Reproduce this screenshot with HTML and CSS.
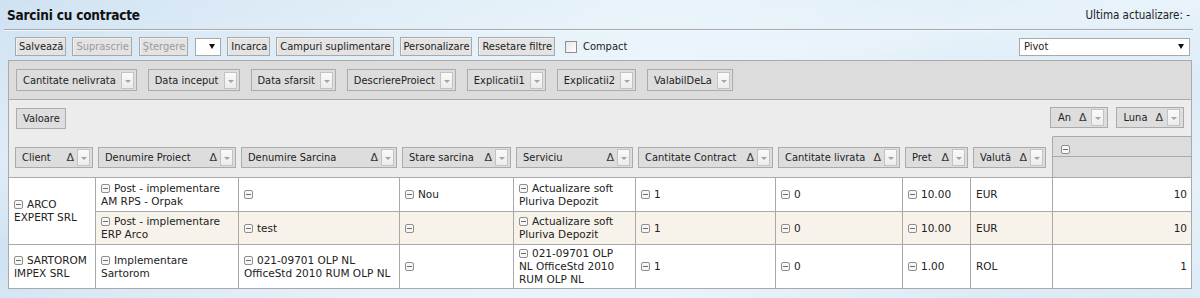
FILE: index.html
```html
<!DOCTYPE html>
<html lang="ro">
<head>
<meta charset="utf-8">
<title>Sarcini cu contracte</title>
<link rel="stylesheet" href="styles.css">
</head>
<body>
<div class="titlebar">
  <h1 class="title">Sarcini cu contracte</h1>
  <span class="updated">Ultima actualizare: -</span>
</div>

<div class="toolbar">
  <div class="tools">
    <button class="btn">Salvează</button>
    <button class="btn" disabled>Suprascrie</button>
    <button class="btn btn-gap" disabled>Ştergere</button>
    <span class="select small-select"><span class="select-text"></span><span class="select-arrow"></span></span>
    <button class="btn">Incarca</button>
    <button class="btn">Campuri suplimentare</button>
    <button class="btn">Personalizare</button>
    <button class="btn">Resetare filtre</button>
    <label class="check"><span class="checkbox"></span>Compact</label>
  </div>
  <span class="select wide-select"><span class="select-text">Pivot</span><span class="select-arrow"></span></span>
</div>

<div class="pivot">
  <div class="filter-area">
    <span class="field"><span class="field-name">Cantitate nelivrata</span><span class="dd"></span></span>
    <span class="field"><span class="field-name">Data inceput</span><span class="dd"></span></span>
    <span class="field"><span class="field-name">Data sfarsit</span><span class="dd"></span></span>
    <span class="field"><span class="field-name">DescriereProiect</span><span class="dd"></span></span>
    <span class="field"><span class="field-name">Explicatii1</span><span class="dd"></span></span>
    <span class="field"><span class="field-name">Explicatii2</span><span class="dd"></span></span>
    <span class="field"><span class="field-name">ValabilDeLa</span><span class="dd"></span></span>
  </div>

  <div class="data-area">
    <span class="field data-field"><span class="field-name">Valoare</span></span>
    <div class="col-fields">
      <span class="field col-field"><span class="field-name">An</span><span class="sort">Δ</span><span class="dd"></span></span>
      <span class="field col-field"><span class="field-name">Luna</span><span class="sort">Δ</span><span class="dd"></span></span>
    </div>
  </div>

  <table class="grid">
    <colgroup>
      <col class="c1"><col class="c2"><col class="c3"><col class="c4"><col class="c5">
      <col class="c6"><col class="c7"><col class="c8"><col class="c9"><col class="c10">
    </colgroup>
    <thead>
      <tr class="row-fields">
        <th class="first"><span class="field row-field"><span class="field-name">Client</span><span class="sort">Δ</span><span class="dd"></span></span></th>
        <th><span class="field row-field"><span class="field-name">Denumire Proiect</span><span class="sort">Δ</span><span class="dd"></span></span></th>
        <th><span class="field row-field"><span class="field-name">Denumire Sarcina</span><span class="sort">Δ</span><span class="dd"></span></span></th>
        <th><span class="field row-field"><span class="field-name">Stare sarcina</span><span class="sort">Δ</span><span class="dd"></span></span></th>
        <th><span class="field row-field"><span class="field-name">Serviciu</span><span class="sort">Δ</span><span class="dd"></span></span></th>
        <th><span class="field row-field"><span class="field-name">Cantitate Contract</span><span class="sort">Δ</span><span class="dd"></span></span></th>
        <th><span class="field row-field"><span class="field-name">Cantitate livrata</span><span class="sort">Δ</span><span class="dd"></span></span></th>
        <th><span class="field row-field"><span class="field-name">Pret</span><span class="sort">Δ</span><span class="dd"></span></span></th>
        <th class="last-row-field"><span class="field row-field"><span class="field-name">Valută</span><span class="sort">Δ</span><span class="dd"></span></span></th>
        <th class="colhead">
          <div class="colhead-top"><span class="tg"></span></div>
          <div class="colhead-bottom"></div>
        </th>
      </tr>
    </thead>
    <tbody>
      <tr class="r1">
        <td rowspan="2" class="client"><span class="tg"></span>ARCO<br>EXPERT SRL</td>
        <td><span class="tg"></span>Post - implementare<br>AM RPS - Orpak</td>
        <td><span class="tg"></span></td>
        <td><span class="tg"></span>Nou</td>
        <td><span class="tg"></span>Actualizare soft<br>Pluriva Depozit</td>
        <td><span class="tg"></span>1</td>
        <td><span class="tg"></span>0</td>
        <td><span class="tg"></span>10.00</td>
        <td>EUR</td>
        <td class="num">10</td>
      </tr>
      <tr class="r2 alt">
        <td><span class="tg"></span>Post - implementare<br>ERP Arco</td>
        <td><span class="tg"></span>test</td>
        <td><span class="tg"></span></td>
        <td><span class="tg"></span>Actualizare soft<br>Pluriva Depozit</td>
        <td><span class="tg"></span>1</td>
        <td><span class="tg"></span>0</td>
        <td><span class="tg"></span>10.00</td>
        <td>EUR</td>
        <td class="num">10</td>
      </tr>
      <tr class="r3">
        <td class="client"><span class="tg"></span>SARTOROM<br>IMPEX SRL</td>
        <td><span class="tg"></span>Implementare<br>Sartorom</td>
        <td><span class="tg"></span>021-09701 OLP NL<br>OfficeStd 2010 RUM OLP NL</td>
        <td><span class="tg"></span></td>
        <td><span class="tg"></span>021-09701 OLP<br>NL OfficeStd 2010<br>RUM OLP NL</td>
        <td><span class="tg"></span>1</td>
        <td><span class="tg"></span>0</td>
        <td><span class="tg"></span>1.00</td>
        <td>ROL</td>
        <td class="num">1</td>
      </tr>
    </tbody>
  </table>
</div>
</body>
</html>
```

FILE: styles.css
```css
html, body {
  margin: 0;
  padding: 0;
}

body {
  width: 1200px;
  height: 298px;
  overflow: hidden;
  font-family: "DejaVu Sans Condensed", "DejaVu Sans", sans-serif;
  font-stretch: condensed;
  font-size: 11px;
  color: #222;
  background:
    linear-gradient(172deg, rgba(255,255,255,0) 0%, rgba(255,255,255,0.35) 35%, rgba(255,255,255,0) 55%, rgba(255,255,255,0.3) 75%, rgba(255,255,255,0) 100%),
    linear-gradient(90deg, #cfe2f2 0%, #dcebf6 30%, #e3f0f9 55%, #d9eaf6 80%, #dcecf7 100%);
}

/* ---------- title ---------- */
.titlebar {
  display: flex;
  justify-content: space-between;
  align-items: center;
  height: 29px;
  margin: 0 7px 0 4px;
  padding: 0 3px;
  border-bottom: 1px solid #a7a9ab;
  box-shadow: 0 1px 0 #f2f7fb;
}

.title {
  margin: 0;
  font-size: 13.5px;
  letter-spacing: -0.2px;
  font-weight: bold;
  color: #111;
}

.updated {
  font-size: 11.5px;
  color: #222;
}

/* ---------- toolbar ---------- */
.toolbar {
  display: flex;
  justify-content: space-between;
  align-items: center;
  height: 19px;
  margin: 7px 10px 0 15px;
}

.tools {
  display: flex;
  align-items: center;
  gap: 6px;
}

.btn {
  height: 19px;
  padding: 0 2px 0 3px;
  border: 1px solid #a9a9a9;
  background: #e3e3e3;
  font-family: inherit;
  font-stretch: condensed;
  font-size: 11px;
  color: #222;
  box-shadow: inset 1px 1px 0 #f2f2f2;
}

.btn:disabled {
  color: #9b9b9b;
}

.btn-gap {
  margin-left: 1px;
}

.select {
  display: inline-flex;
  align-items: center;
  height: 18px;
  box-sizing: border-box;
  border: 1px solid #a9a9a9;
  background: #fff;
  padding: 0 5px 0 4px;
}

.small-select {
  width: 26px;
  margin-left: 1px;
}

.wide-select {
  width: 171px;
}

.select-text {
  flex: 1;
}

.select-arrow {
  width: 0;
  height: 0;
  border-left: 3px solid transparent;
  border-right: 3px solid transparent;
  border-top: 5px solid #111;
}

.check {
  display: inline-flex;
  align-items: center;
  gap: 6px;
  margin-left: 4px;
}

.checkbox {
  width: 12px;
  height: 12px;
  box-sizing: border-box;
  border: 1px solid #8e8f8f;
  background: linear-gradient(135deg, #e6e6e6, #fff);
}

/* ---------- pivot ---------- */
.pivot {
  margin: 4px 8px 0 8px;
  border: 1px solid #a9a9a9;
  border-bottom: 0;
  background: #ececec;
}

.filter-area {
  display: flex;
  align-items: center;
  height: 38px;
  padding-left: 7px;
  background: #dcdcdc;
  border-bottom: 1px solid #a9a9a9;
}

.filter-area .field {
  margin-right: 11px;
  height: 22px;
}

.field {
  display: inline-flex;
  align-items: center;
  box-sizing: border-box;
  height: 21px;
  padding: 0 2px 0 6px;
  border: 1px solid #ababab;
  background: #dddddd;
  white-space: nowrap;
}

.field-name {
  margin-right: 5px;
}

.dd {
  position: relative;
  width: 11px;
  height: 15px;
  border: 1px solid #c3c3c3;
  background: linear-gradient(#fafafa, #ececec);
}

.dd::after {
  content: "";
  position: absolute;
  left: 3px;
  top: 7px;
  border-left: 3px solid transparent;
  border-right: 3px solid transparent;
  border-top: 3px solid #a4a4a4;
}

.sort {
  font-family: "DejaVu Sans", sans-serif;
  font-stretch: normal;
  font-size: 11px;
  margin-right: 3px;
  color: #333;
}

.data-area {
  display: flex;
  align-items: center;
  justify-content: space-between;
  height: 36px;
  padding: 0 7px;
}

.data-field {
  height: 21px;
  padding: 0 5px 0 6px;
  background: #dedede;
}

.data-field .field-name {
  margin-right: 0;
}

.col-fields {
  display: flex;
  gap: 8px;
  margin-top: -2px;
}

.col-field {
  height: 21px;
  padding: 0 3px 0 7px;
}

.col-field .field-name {
  margin-right: 8px;
}

.col-field .sort {
  margin-right: 4px;
}

/* ---------- grid ---------- */
.grid {
  width: 1182px;
  table-layout: fixed;
  border-collapse: separate;
  border-spacing: 0;
  font-family: "DejaVu Sans", sans-serif;
  font-stretch: normal;
  font-size: 10.5px;
  line-height: 13px;
  color: #222;
}

.c1 { width: 87px; }
.c2 { width: 143px; }
.c3 { width: 161px; }
.c4 { width: 114px; }
.c5 { width: 122px; }
.c6 { width: 140px; }
.c7 { width: 127px; }
.c8 { width: 68px; }
.c9 { width: 82px; }
.c10 { width: 138px; }

.row-fields th {
  height: 40px;
  padding: 0 3px 0 2px;
  border-top: 1px solid transparent;
  border-bottom: 1px solid #a9a9a9;
  font-family: "DejaVu Sans Condensed", "DejaVu Sans", sans-serif;
  font-stretch: condensed;
  font-size: 11px;
  font-weight: normal;
  text-align: left;
  vertical-align: middle;
}

.row-fields th.first {
  padding-left: 6px;
}

.row-fields th.last-row-field {
  padding-right: 6px;
  border-right: 1px solid #a9a9a9;
}

.row-field {
  display: flex;
  width: 100%;
}

.row-field .field-name {
  flex: 1;
}

.row-fields th.colhead {
  padding: 0;
  border-top: 1px solid #a9a9a9;
  background: #dcdcdc;
  vertical-align: top;
}

.colhead-top {
  height: 20px;
  padding: 6px 0 0 8px;
  box-sizing: border-box;
  border-bottom: 1px solid #a9a9a9;
}

.colhead-bottom {
  height: 19px;
}

.grid td {
  padding: 0 4px 0 5px;
  border-right: 1px solid #a9a9a9;
  border-bottom: 1px solid #a9a9a9;
  background: #fff;
  vertical-align: middle;
  white-space: nowrap;
}

.grid td:last-child {
  border-right: 0;
}

.grid td.client {
  border-right: 1px solid #a9a9a9;
}

.grid tr.alt td {
  background: #f7f3eb;
}

.r1 td { height: 33px; }
.r2 td { height: 32px; }
.r3 td { height: 43px; }

.grid td.num {
  text-align: right;
  padding-right: 4px;
}

/* collapse toggle */
.tg {
  position: relative;
  display: inline-block;
  width: 9px;
  height: 9px;
  box-sizing: border-box;
  margin-right: 4px;
  border: 1px solid #8f8f8f;
  border-radius: 2px;
  background: #f6f6f6;
  vertical-align: -1px;
}

.tg::after {
  content: "";
  position: absolute;
  left: 1px;
  right: 1px;
  top: 3px;
  height: 1px;
  background: #6d6d6d;
}
```
